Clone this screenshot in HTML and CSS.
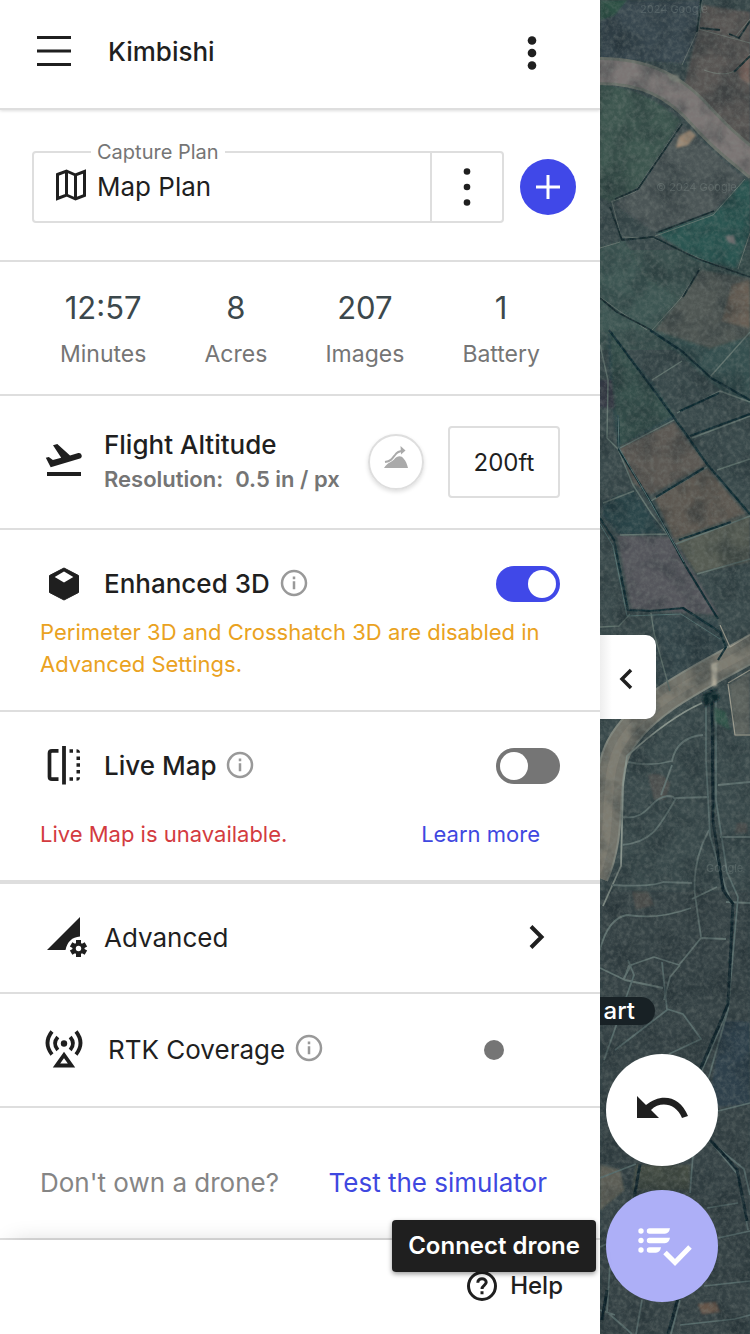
FILE: index.html
```html
<!DOCTYPE html>
<html lang="en">
<head>
<meta charset="utf-8">
<meta name="viewport" content="width=device-width, initial-scale=1">
<title>Kimbishi</title>
<link rel="stylesheet" href="styles.css">
</head>
<body class="app">
<aside class="panel">
  <header class="topbar">
    <button class="icon-btn" aria-label="Menu"><svg width="34" height="32" viewBox="0 0 34 32"><path d="M0 1.500h34M0 15h34M0 28.500h34" stroke="#1f1f1f" stroke-width="3"/></svg></button>
    <h1 class="project">Kimbishi</h1>
    <button class="icon-btn" aria-label="Project options"><svg width="10" height="34" viewBox="0 0 10 34"><g fill="#1f1f1f"><circle cx="5" cy="5.500" r="4.300"/><circle cx="5" cy="18" r="4.300"/><circle cx="5" cy="30.500" r="4.300"/></g></svg></button>
  </header>

  <section class="plan">
    <div class="plan-field">
      <label class="plan-label" for="plan">Capture Plan</label>
      <svg width="32" height="32" viewBox="0 0 32 32" fill="none" stroke="#1f1f1f" stroke-width="3"><path d="M2.500 3.500 11.500 0l9 4 9-3.500v24l-9 3.500-9-4-9 3.500zM11.500 0v24M20.500 4v24"/></svg>
      <select class="plan-select" id="plan"><option>Map Plan</option></select>
    </div>
    <button class="plan-more" aria-label="Plan options"><svg width="8" height="38" viewBox="0 0 8 38"><g fill="#1f1f1f"><circle cx="4" cy="3.500" r="3.300"/><circle cx="4" cy="19" r="3.300"/><circle cx="4" cy="34.500" r="3.300"/></g></svg></button>
    <button class="plan-add" aria-label="Add plan"><svg width="24" height="24" viewBox="0 0 24 24"><path d="M12 0v24M0 12h24" stroke="#fff" stroke-width="3"/></svg></button>
  </section>

  <dl class="stats">
    <div class="stat"><dd class="stat-value">12:57</dd><dt class="stat-name">Minutes</dt></div>
    <div class="stat"><dd class="stat-value">8</dd><dt class="stat-name">Acres</dt></div>
    <div class="stat"><dd class="stat-value">207</dd><dt class="stat-name">Images</dt></div>
    <div class="stat"><dd class="stat-value">1</dd><dt class="stat-name">Battery</dt></div>
  </dl>

  <section class="row altitude">
    <svg class="row-icon" width="40" height="40" viewBox="0 0 40 40"><path d="M3 32h34" stroke="#1f1f1f" stroke-width="3.800"/><path d="M1.800 15.800 4.800 15l4.100 3 8.300-2.200L9 3.300 13.300 2 26 13.400 34.300 11.100a2.900 2.900 0 0 1 1.700 5.500L6.700 25.300z" fill="#1f1f1f"/></svg>
    <div class="grow">
      <label class="row-title strong" for="alt">Flight Altitude</label>
      <p class="resolution"><span>Resolution:</span><span>0.5 in / px</span></p>
    </div>
    <button class="terrain" aria-label="Terrain awareness"><svg width="28" height="26" viewBox="0 0 28 26"><path d="M2 22c4-6 8-6 10-8.500 3-3.500 7-4.500 9.500-1C24 15 25 18 26 22z" fill="#aaa"/><path d="M3 16c6-1 7-3 10-7 2-3 5-4 8-4" fill="none" stroke="#aaa" stroke-width="2"/><path d="m18.500 0 5 4.500-4.500 4z" fill="#aaa"/></svg></button>
    <input class="alt-input" id="alt" type="text" value="200ft">
  </section>

  <section class="block enhanced">
    <div class="row">
      <svg class="row-icon" width="40" height="40" viewBox="0 0 40 40"><path d="M20 4 34.500 11.500v17L20 36 5.500 28.500v-17z" fill="#1f1f1f" stroke="#1f1f1f" stroke-linejoin="round"/><path d="M20 7.500 29.300 13 20 18.500 10.700 13z" fill="#fff"/></svg>
      <label class="row-title strong" for="e3d">Enhanced 3D</label>
      <button class="info" aria-label="About Enhanced 3D"><svg width="28" height="28" viewBox="0 0 28 28"><circle cx="14" cy="13" r="12" fill="none" stroke="#999" stroke-width="2.500"/><path d="M14 11.300v8M14 6.500v2.700" stroke="#999" stroke-width="2.500"/></svg></button>
      <span class="grow"></span>
      <input class="switch" id="e3d" type="checkbox" checked>
    </div>
    <p class="note warn">Perimeter 3D and Crosshatch 3D are disabled in Advanced Settings.</p>
  </section>

  <section class="block live">
    <div class="row">
      <svg class="row-icon" width="40" height="40" viewBox="0 0 40 40"><g fill="none" stroke="#1f1f1f"><path d="M14.500 4.800H8q-2.500 0-2.500 2.500v23.400q0 2.500 2.500 2.500h6.500" stroke-width="3.700"/><path d="M20 0v38.500" stroke-width="3.800"/></g><g fill="#1f1f1f"><path d="M25.500 3.200H29v3.500h-3.500zM25.500 31.300H29v3.500h-3.500zM32.500 10.500H36V14h-3.500zM32.500 17.300H36v3.500h-3.500zM32.500 24H36v3.500h-3.500zM32.500 3.200q3.500 0 3.500 3.500h-3.500zM32.500 34.800q3.500 0 3.500-3.500h-3.500z"/></g></svg>
      <label class="row-title strong" for="live">Live Map</label>
      <button class="info" aria-label="About Live Map"><svg width="28" height="28" viewBox="0 0 28 28"><circle cx="14" cy="13" r="12" fill="none" stroke="#999" stroke-width="2.500"/><path d="M14 11.300v8M14 6.500v2.700" stroke="#999" stroke-width="2.500"/></svg></button>
      <span class="grow"></span>
      <input class="switch" id="live" type="checkbox">
    </div>
    <div class="note-row">
      <p class="note error">Live Map is unavailable.</p>
      <a class="link" href="#">Learn more</a>
    </div>
  </section>

  <button class="row advanced">
    <svg class="row-icon" width="44" height="44" viewBox="0 0 44 44"><path d="M3 34 36 1v19.500q-12 1-14.500 13.500z" fill="#1f1f1f"/><g transform="translate(34.500 32.500)"><g stroke="#1f1f1f" stroke-width="5"><path d="M0-8.500V8.500M-7.400-4.200 7.400 4.200M-7.400 4.200 7.400-4.200"/></g><circle r="6" fill="#1f1f1f"/><circle r="2.700" fill="#fff"/></g></svg>
    <span class="row-title grow">Advanced</span>
    <svg width="16" height="26" viewBox="0 0 16 26"><path d="M3 1.500 13.500 12 3 22.500" fill="none" stroke="#1f1f1f" stroke-width="4"/></svg>
  </button>

  <section class="row rtk">
    <svg class="row-icon" width="40" height="40" viewBox="0 0 40 40" fill="none" stroke="#1f1f1f" stroke-width="3.800"><path d="M8 1.500q-9 11.500 0 23M32 1.500q9 11.500 0 23M13.800 7q-5.500 6.500 0 13M26.200 7q5.500 6.500 0 13"/><circle cx="20" cy="13.500" r="3.200" fill="#1f1f1f" stroke="none"/><path d="M20 25 12.500 35.500h15z"/></svg>
    <span class="row-title">RTK Coverage</span>
    <button class="info" aria-label="About RTK Coverage"><svg width="28" height="28" viewBox="0 0 28 28"><circle cx="14" cy="12" r="12" fill="none" stroke="#999" stroke-width="2.500"/><path d="M14 10.300v8M14 5.500v2.700" stroke="#999" stroke-width="2.500"/></svg></button>
    <span class="grow"></span>
    <span class="status-dot"></span>
  </section>

  <section class="simulator">
    <span>Don't own a drone?</span>
    <a class="sim-link" href="#">Test the simulator</a>
  </section>

  <footer class="footer">
    <button class="help"><svg width="32" height="32" viewBox="0 0 32 32" fill="none" stroke="#1f1f1f" stroke-width="3"><circle cx="16" cy="16" r="13.500"/><path d="M11.800 12.800c0-5.600 8.400-5.300 8.400-.5 0 3-4.200 3.300-4.200 6.700M16 21.200v3"/></svg>Help</button>
    <span class="tooltip" role="tooltip">Connect drone</span>
  </footer>
</aside>

<main class="map">
  <svg class="terrain-map" viewBox="0 0 150 1334" preserveAspectRatio="xMidYMin slice" aria-hidden="true">
    <defs>
      <filter id="grain" x="0" y="0" width="100%" height="100%" color-interpolation-filters="sRGB"><feTurbulence type="fractalNoise" baseFrequency=".22" numOctaves="4" seed="8"/><feColorMatrix values="0 0 0 0 .52  0 0 0 0 .55  0 0 0 0 .53  .9 .9 0 0 -.72"/></filter>
      <filter id="shade" x="0" y="0" width="100%" height="100%" color-interpolation-filters="sRGB"><feTurbulence type="fractalNoise" baseFrequency=".035" numOctaves="4" seed="3"/><feColorMatrix values="0 0 0 0 .08  0 0 0 0 .13  0 0 0 0 .15  1 0 0 0 -.42"/></filter>
      <filter id="soft"><feGaussianBlur stdDeviation="1"/></filter>
      <filter id="fine"><feGaussianBlur stdDeviation=".4"/></filter>
    </defs>
    <path fill="#39494b" d="M0 0h150v1334H0z"/>
    <path fill="#3a504e" d="M0 250h150v100H0z"/>
    <g filter="url(#soft)">
      <path fill="#374650" d="M0 20 28 0h72l-4 38-12 25L0 58z"/>
      <path fill="#2d5145" d="M0 0h27L14 16 0 20z"/>
      <path fill="#585553" d="m103 5 47 7v135l-67-58 13-51z"/>
      <path fill="#77635c" d="m138 68 12-14v30l-10-6z"/>
      <path fill="#3c5650" d="M0 84q48 5 81 37l-43 68-28 13-10-5z"/>
      <path fill="#4b5557" d="m82 124 62 54-30 34-60 20-40-28 24-17z"/>
      <path fill="#2c5551" d="m145 180-31 33-58 20 40 26 40 10 14-36v-53z"/>
      <path fill="#3e5652" d="m0 248 24-8 26 40 27 17-22 33H0z"/>
      <path fill="#505653" d="m100 270 50 8v58l-40 12-55-18 27-33z"/>
      <path fill="#685f54" d="m132 285 18-5v48l-28-7z"/>
      <path fill="#2b474b" d="M8 334 24 354 50 380 75 418 18 447 10 382z"/>
      <path fill="#35504c" d="m10 330 15 23 49 62-54 31-7-50z"/>
      <path fill="#393b46" d="M0 380h12l3 28-15-1z"/>
      <path fill="#34504f" d="m52 330 58 20 40-14v66l-30-12z"/>
      <path fill="#5b5852" d="m19 448 55-26 32 43-55 30-18-12z"/>
      <path fill="#5d5951" d="m54 497 53-29 39 46-72 25z"/>
      <path fill="#575b52" d="m75 540 70-24 5 1v45l-54 11z"/>
      <path fill="#2b444a" d="m3 502 31-12 29 43-44 2-17-20z"/>
      <path fill="#55575b" d="m17 535 55 2 47 78-88-6z"/>
      <path fill="#35474b" d="m52 613 64 5 10 30-68 42z"/>
      <path fill="#5c625d" d="m129 684 21-12v62l-15 2z"/>
      <path fill="#364345" d="M0 890h150v444H0z"/>
      <path fill="#2e414c" d="m122 1020 28 2v82l-42 4z"/>
      <path fill="#465044" d="M36 1165h54v25H32z"/>
      <path fill="#5b5d54" d="m0 1165 20 5 4 20-24 20z"/>
      <path fill="#5e5450" d="M48 775q15-5 22 9l-4 15-12 1zM32 892h16l6 13-18 5zM137 823h10v10h-12z" opacity=".5"/>
      <path fill="#85614c" d="m98 1304 18-2 4 10-18 2z" opacity=".6"/>
    </g>
    <g fill="none" stroke-linejoin="round" filter="url(#fine)">
      <path d="M-4 71c48-1 79 15 106 46 21 23 32 31 56 51" stroke="#6b7069" stroke-width="28"/>
      <path d="M-4 71c48-1 79 15 106 46 21 23 32 31 56 51" stroke="#7b7675" stroke-width="22"/>
      <path d="M158 645c-47 28-114 55-139 102-18 36-3 81-24 129" stroke="#81867d" stroke-width="28"/>
      <path d="M158 645c-47 28-114 55-139 102-18 36-3 81-24 129" stroke="#73736a" stroke-width="24"/>
      <path d="M158 645c-47 28-114 55-139 102-18 36-3 81-24 129" stroke="#858177" stroke-width="9" opacity=".6"/>
      <path d="m102 0-4 30-16 35M98 29l52 14M128 34l7 3 15-18M150 54c-9 15-19 26-46 16M81 124l-46 68-24 10M145 179l-32 36-58 21M100 268l-19 30-29 32M0 297l18 13 29 20M138 269l12-36M0 248l20-6M12 202l9 35 32 1 50 22 47 17" stroke="#76817b" opacity=".7"/>
      <path d="m101 0-4 32M82 124l-44 65-23 10M10 207l12 33 31-3 45 22 52 18M56 233l58-22M0 298l17 14 34 18M99 270l-16 27M100 28l20 2M129 34l10 4 11-17M150 56l-16 16" stroke="#142a2e" stroke-width="1.800"/>
      <path d="m0 345 8 35-1 58 11 11 15 36 18 28 24 31M52 380l30-19M110 377l40-45M77 413l43-22 30 11M92 438l58-22M20 448l54-28M51 501l56-34M3 503l31-12M76 544l74-28M97 574l53-15M117 470l33-11M20 535l47-1M0 627l19-1 11-12M51 613l3 20 16 58" stroke="#62746f" stroke-width="1.400"/>
      <path d="m9 330 67 90 31 44 43 50M50 330l33 22 28 26 39 22M18 415l1 35 35 57 31 58 33 54M0 518l14 22 14 70 23 1 32-3 37 24 6 15-8 13M90 436l60-22M80 411l39-18M56 497l48-29M79 540l52-18" stroke="#102a30" stroke-width="2.200"/>
      <path d="m18 415 1 33 32 55 33 59M0 524l13 22 14 70 54-2 39 25" stroke="#527171"/>
      <path d="M102 703q-32 14-75 53l-4 30-2 80-18 40" stroke="#8b978f" stroke-width="1.800"/>
      <path d="M28 762q22 5 44-1 5-24 31-26M72 765l-11 30M23 817c26 4 27-20 45-21q7 0 6 3M22 845c30-3 37-17 54-47l33-1M12 885q40 2 51-3l29 1M0 950q8-32 27-35 31 5 64-7M109 830q-17 31-14 65l6 42M92 899l25-12M23 980l8-15 23-8 25 8 22-27 25 1M0 968l25 12 38 8M24 980l5-15M64 1000l6-23 10-12M118 785l32-3M120 837h30M126 902l24 1" stroke="#5f716f" stroke-width="1.800"/>
      <path d="M106 695v65l4 76 15 50 8 20-5 104-28 65M116 700v100l11 72 11 25-10 113-20 70M93 1155l-3 38M108 1138l30 37 10 55M108 1140l36 29 6 26M4 1060l30-85-6-15M15 1050l52-40-5-48M67 1009l16 5 18 25-32 15M118 1111l32-8M107 1208l31-5M118 1238l32-7M104 1286l46-5M80 1325l55-6 15-4M10 1265l-3 47 25 22M42 1300l-6 34M80 1300l-9 34M0 1247l18-8M0 1310l15 5M0 1178l36-14" stroke="#566b6b" stroke-width="1.700"/>
      <path d="m112 690 1 130 10 70 10 14-5 100-28 66M40 1164l-6 35M7 1290l-5 30M78 1298l-10 36M110 1140l27 29 10 52" stroke="#10242a" stroke-width="3"/>
      <path d="m128 684 7 51h15M120 625l10 22 20-12M128 683l22-13" stroke="#a19f91" stroke-width="1.200"/>
    </g>
    <g filter="url(#soft)"><path fill="#a18b74" d="m79 136 11-6 6 5-8 10-12 3z"/><path fill="#8d9085" d="m67 74 11 1 3 8-10-2z"/><path fill="#777" d="m125 236 9-1 2 10-8-3z"/><path fill="#10262c" d="m101 695 15-6 4 10-15 8z"/><path fill="#33564b" d="m114 707 12 5 4 18-15-8z"/><path fill="#c5beaa" d="m111 664 6-2v24h-5z"/></g>
    <path filter="url(#shade)" d="M0 0h150v1334H0z"/>
    <path filter="url(#grain)" d="M0 0h150v1334H0z" opacity=".5"/>
    <g class="watermark"><text x="40" y="13">2024 Google</text><text x="56" y="191">© 2024 Google</text><text x="106" y="872">Google</text></g>
  </svg>
  <span class="start">art</span>
  <button class="collapse" aria-label="Collapse panel"><svg width="18" height="22" viewBox="0 0 18 22"><path d="M12 2 3 11l9 9" fill="none" stroke="#1f1f1f" stroke-width="3.500"/></svg></button>
  <div class="fabs">
    <button class="fab" aria-label="Undo"><svg width="56" height="56" viewBox="0 0 56 56"><path d="M3 14v22h22l-8-8c9-9 25-7 31 8l6-2C46 13 26 11 12 23z" fill="#1f1f1f"/></svg></button>
    <button class="fab primary" aria-label="Connect drone"><svg width="56" height="56" viewBox="0 0 56 56" fill="#fff"><circle cx="7" cy="13" r="2.700"/><circle cx="7" cy="22.500" r="2.700"/><circle cx="7" cy="32" r="2.700"/><path d="M15.500 10.300H36q-1 5.400-5 5.400H15.500a2.700 2.700 0 0 1 0-5.400zM15.500 19.800H36q-1 5.400-5 5.400H15.500a2.700 2.700 0 0 1 0-5.400zM15.500 29.300H27q-1 5.400-5 5.400h-6.500a2.700 2.700 0 0 1 0-5.400z"/><path d="m31 34.500 10 10L56 29" fill="none" stroke="#fff" stroke-width="5"/></svg></button>
  </div>
</main>
</body>
</html>
```
FILE: styles.css
```css
* { box-sizing: border-box; }

.app {
  margin: 0;
  min-height: 100vh;
  display: flex;
  background: #fff;
  color: #1f1f1f;
  font-family: Inter, "Liberation Sans", sans-serif;
  font-size: 26px;
  line-height: 32px;
}

button, input, select { font: inherit; color: inherit; }
button { border: 0; padding: 0; background: none; cursor: pointer; }
svg { display: block; flex: none; overflow: visible; }
h1, p, dl, dd { margin: 0; }
a { text-decoration: none; color: #3f48e0; }

.panel {
  flex: 0 0 80%;
  display: flex;
  flex-direction: column;
  position: relative;
  z-index: 1;
  background: #fff;
}
.panel > * { border-bottom: 2px solid #dedede; }
.grow { flex: 1; }

.topbar {
  display: flex;
  align-items: center;
  height: 110px;
  padding: 0 63px 4px 37px;
  box-shadow: 0 1px 3px #0002;
}
.project { flex: 1; margin-left: 37px; font-size: 26px; font-weight: 500; }

.plan { display: flex; align-items: center; height: 152px; padding: 4px 24px 0 32px; }
.plan-field {
  flex: 1;
  position: relative;
  display: flex;
  align-items: center;
  height: 72px;
  padding-left: 21px;
  border: 2px solid #dedede;
  border-radius: 4px 0 0 4px;
}
.plan-label {
  position: absolute;
  top: -17px;
  left: 57px;
  padding: 0 6px;
  background: #fff;
  color: #757575;
  font-size: 20px;
}
.plan-select { flex: 1; margin-left: 10px; padding: 0; border: 0; background: none; appearance: none; }
.plan-more {
  display: grid;
  place-items: center;
  width: 72px;
  height: 72px;
  border: 2px solid #dedede;
  border-left: 0;
  border-radius: 0 4px 4px 0;
}
.plan-add {
  display: grid;
  place-items: center;
  width: 56px;
  height: 56px;
  margin-left: 16px;
  border-radius: 50%;
  background: #4048e8;
}

.stats {
  display: flex;
  justify-content: space-between;
  height: 134px;
  padding: 28px 60px 0;
  text-align: center;
}
.stat-value { color: #3c484c; font-size: 31px; line-height: 36px; }
.stat-name { margin-top: 12px; color: #757575; font-size: 23px; }

.row { display: flex; align-items: center; }
.row-icon { margin-right: 20px; }
.row-title { display: block; }
.strong { font-weight: 500; }
.info { margin-left: 10px; }

.altitude { height: 134px; padding: 0 40px 0 44px; }
.resolution { display: flex; gap: 12px; margin-top: 2px; color: #757575; font-size: 22px; font-weight: 600; }
.terrain {
  display: grid;
  place-items: center;
  width: 56px;
  height: 56px;
  margin-right: 24px;
  padding-bottom: 6px;
  border: 2px solid #dedede;
  border-radius: 50%;
  box-shadow: 0 2px 4px #0002;
}
.alt-input {
  width: 112px;
  height: 72px;
  padding: 0;
  border: 2px solid #dedede;
  border-radius: 4px;
  background: #fff;
  font-size: 24px;
  text-align: center;
}

.block { padding: 0 40px; }
.block .row { padding-left: 4px; }
.enhanced { height: 182px; padding-top: 34px; }
.live { height: 172px; padding-top: 34px; border-bottom-width: 4px; }
.note { font-size: 22px; }
.enhanced .note { margin-top: 12px; }
.warn { color: #eaa221; }
.error { color: #d33b40; }
.note-row { display: flex; justify-content: space-between; margin-top: 32px; padding-right: 20px; font-size: 22px; }

.switch {
  appearance: none;
  width: 64px;
  height: 36px;
  margin: 0;
  padding: 4px;
  border-radius: 18px;
  background: #757575;
}
.switch::before { content: ""; display: block; width: 28px; height: 28px; border-radius: 50%; background: #fff; }
.switch:checked { background: #4048e8; }
.switch:checked::before { margin-left: auto; }

.advanced { height: 110px; padding: 0 56px 0 44px; border-bottom: 2px solid #dedede; text-align: left; }
.advanced .row-icon { margin-right: 16px; }
.rtk { height: 114px; padding: 0 96px 0 44px; }
.rtk .row-icon { margin-right: 24px; }
.status-dot { width: 20px; height: 20px; border-radius: 50%; background: #757575; }

.simulator {
  flex: 1 0 132px;
  display: flex;
  align-items: center;
  justify-content: space-between;
  padding: 20px 53px 0 40px;
  color: #858585;
}
.sim-link { color: #3f48e0; }

.footer {
  position: relative;
  display: flex;
  justify-content: flex-end;
  align-items: center;
  height: 94px;
  padding: 0 37px 2px 0;
  background: #fff;
  box-shadow: 0 -8px 24px -12px #0003, 0 -2px 0 #dedede;
}
.panel > .footer { border-bottom: 0; }
.panel > .simulator { border-bottom-color: transparent; }
.help { display: flex; align-items: center; gap: 12px; font-size: 24px; font-weight: 500; }
.tooltip {
  position: absolute;
  top: -20px;
  right: 4px;
  padding: 10px 16px;
  border-radius: 4px;
  background: #1f1f1f;
  box-shadow: 0 2px 5px #0006;
  color: #fff;
  font-size: 24px;
  font-weight: 600;
  white-space: nowrap;
}

.map { flex: 1; position: relative; overflow: hidden; background: #39494b; }
.terrain-map { position: absolute; inset: 0; width: 100%; height: 100%; }
.watermark { fill: #aebbb5; opacity: .2; font-size: 11px; }
.collapse {
  position: absolute;
  top: 635px;
  left: 0;
  display: grid;
  place-items: center;
  width: 56px;
  height: 84px;
  padding-top: 4px;
  border-radius: 0 10px 10px 0;
  background: linear-gradient(90deg, #eee, #fff 12px);
}
.start {
  position: absolute;
  top: 997px;
  left: 0;
  width: 55px;
  padding-right: 20px;
  border-radius: 0 14px 14px 0;
  background: #182125;
  color: #fff;
  font-size: 24px;
  font-weight: 500;
  line-height: 28px;
  text-align: right;
}
.fabs { position: absolute; right: 32px; bottom: 32px; display: grid; gap: 24px; }
.fab {
  display: grid;
  place-items: center;
  width: 112px;
  height: 112px;
  border-radius: 50%;
  background: #fff;
}
.primary { background: #adaff7; }
```
